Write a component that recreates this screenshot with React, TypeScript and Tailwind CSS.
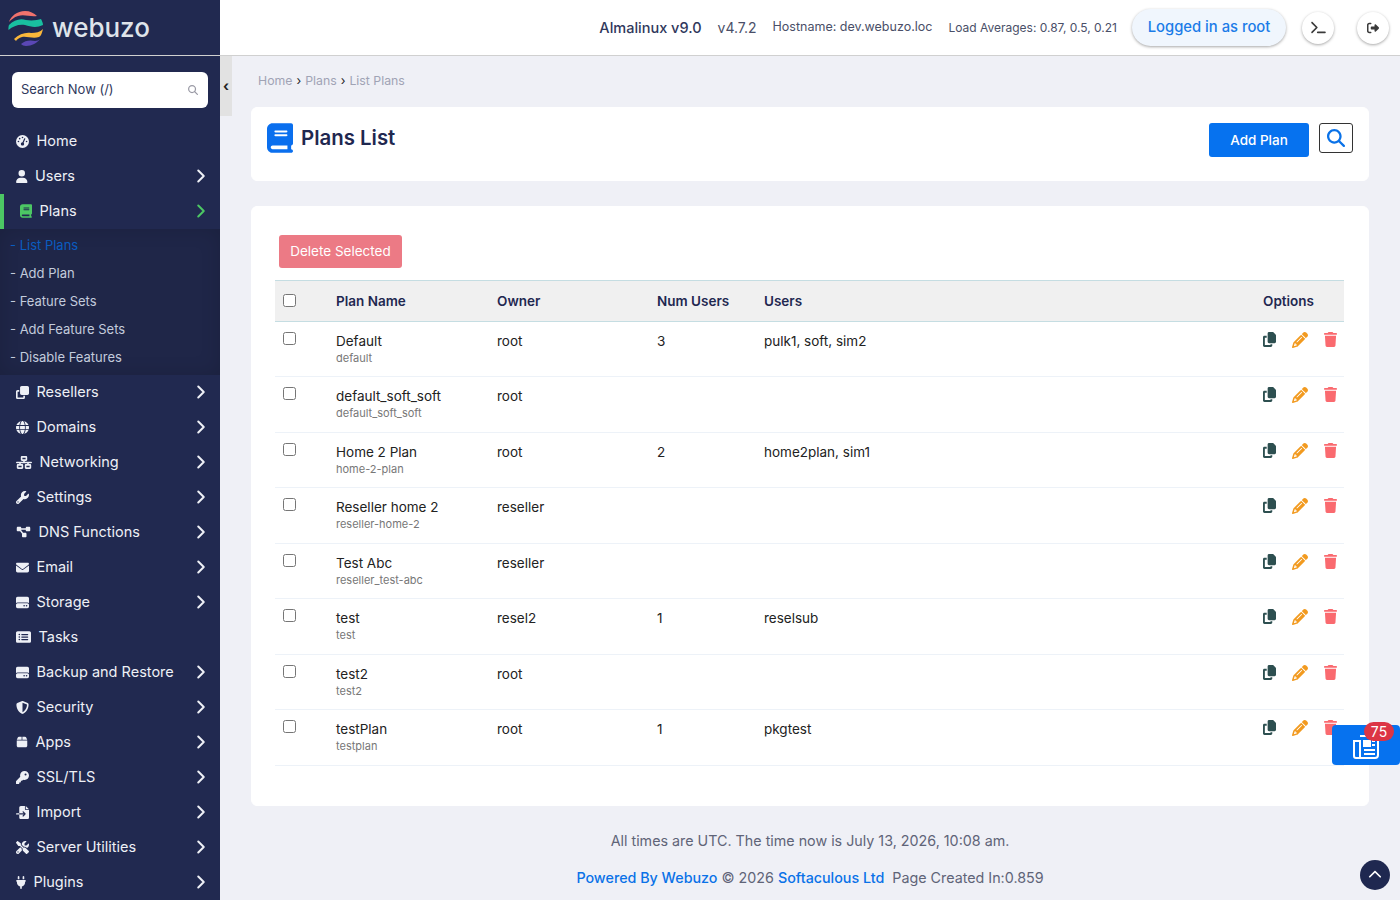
import type { ReactNode } from "react";
import {
  FaBook,
  FaBox,
  FaChevronUp,
  FaClone,
  FaCopy,
  FaEnvelope,
  FaFileImport,
  FaGaugeHigh,
  FaGlobe,
  FaHardDrive,
  FaKey,
  FaNetworkWired,
  FaPencil,
  FaPlug,
  FaRectangleList,
  FaDiagramProject,
  FaMagnifyingGlass,
  FaShieldHalved,
  FaRightFromBracket,
  FaScrewdriverWrench,
  FaTerminal,
  FaTrash,
  FaUser,
  FaWrench,
} from "react-icons/fa6";
import { ChevronRight } from "lucide-react";

type MenuItem = {
  label: string;
  icon: ReactNode;
  arrow?: boolean;
};

const topMenu: MenuItem[] = [
  { label: "Home", icon: <FaGaugeHigh className="h-[13px] w-[13px] shrink-0" /> },
  { label: "Users", icon: <FaUser className="h-[13px] w-[11.5px] shrink-0" />, arrow: true },
];

const bottomMenu: MenuItem[] = [
  { label: "Resellers", icon: <FaClone className="h-[13px] w-[13px] shrink-0" />, arrow: true },
  { label: "Domains", icon: <FaGlobe className="h-[13px] w-[13px] shrink-0" />, arrow: true },
  { label: "Networking", icon: <FaNetworkWired className="h-[13px] w-[16px] shrink-0" />, arrow: true },
  { label: "Settings", icon: <FaWrench className="h-[13px] w-[13px] shrink-0" />, arrow: true },
  { label: "DNS Functions", icon: <FaDiagramProject className="h-[12px] w-[15px] shrink-0" />, arrow: true },
  { label: "Email", icon: <FaEnvelope className="h-[13px] w-[13px] shrink-0" />, arrow: true },
  { label: "Storage", icon: <FaHardDrive className="h-[13px] w-[13px] shrink-0" />, arrow: true },
  { label: "Tasks", icon: <FaRectangleList className="h-[14px] w-[15px] shrink-0" /> },
  { label: "Backup and Restore", icon: <FaHardDrive className="h-[13px] w-[13px] shrink-0" />, arrow: true },
  { label: "Security", icon: <FaShieldHalved className="h-[13px] w-[13px] shrink-0" />, arrow: true },
  { label: "Apps", icon: <FaBox className="h-[12px] w-[12px] shrink-0" />, arrow: true },
  { label: "SSL/TLS", icon: <FaKey className="h-[13px] w-[13px] shrink-0" />, arrow: true },
  { label: "Import", icon: <FaFileImport className="h-[13px] w-[13px] shrink-0" />, arrow: true },
  { label: "Server Utilities", icon: <FaScrewdriverWrench className="h-[13px] w-[13px] shrink-0" />, arrow: true },
  { label: "Plugins", icon: <FaPlug className="h-[13px] w-[10px] shrink-0" />, arrow: true },
];

const subMenu = ["List Plans", "Add Plan", "Feature Sets", "Add Feature Sets", "Disable Features"];

const plans = [
  { name: "Default", slug: "default", owner: "root", num: "3", users: "pulk1, soft, sim2" },
  { name: "default_soft_soft", slug: "default_soft_soft", owner: "root", num: "", users: "" },
  { name: "Home 2 Plan", slug: "home-2-plan", owner: "root", num: "2", users: "home2plan, sim1" },
  { name: "Reseller home 2", slug: "reseller-home-2", owner: "reseller", num: "", users: "" },
  { name: "Test Abc", slug: "reseller_test-abc", owner: "reseller", num: "", users: "" },
  { name: "test", slug: "test", owner: "resel2", num: "1", users: "reselsub" },
  { name: "test2", slug: "test2", owner: "root", num: "", users: "" },
  { name: "testPlan", slug: "testplan", owner: "root", num: "1", users: "pkgtest" },
];

const cols = "grid grid-cols-[61px_161px_160px_107px_499px_82px]";

const MenuRow = ({ item }: { item: MenuItem }) => (
  <div className="flex h-[35px] shrink-0 items-center pl-4 pr-2 text-[14.5px] text-[#eef0f6]">
    {item.icon}
    <span className="ml-[7.5px] flex-1">{item.label}</span>
    {item.arrow && <ChevronRight size={22} strokeWidth={2.2} />}
  </div>
);

const Logo = () => (
  <svg viewBox="0 0 35 35" className="h-[35px] w-[35px]">
    <path d="M1 11C3 5 9 0 17 0C22 0 26 2 29 5C22 6 16 3 10 5C6 6 3 9 1 11Z" fill="#f0726d" />
    <path d="M.5 19C.3 17 .5 15 1 14C6 9 12 7 18 9C24 10 30 9 33 8C34 10 35 12 35 14C29 17 23 16 17 14C11 13 5 15 .5 19Z" fill="#19bfa0" />
    <path d="M6 28C11 23 18 21 23 22C28 22 32 21 35 18C34 22 33 25 31 26C25 28 19 25 14 26C11 27 9 28 8 30Z" fill="#fab73b" />
    <path d="M13 33C17 29 23 29 27 30C29 30 31 29 32 28C29 32 24 35 18 35C16 35 14 34 13 33Z" fill="#5a47b5" />
  </svg>
);

const NewsIcon = () => (
  <svg viewBox="0 0 26 24" className="h-[24px] w-[26px]" fill="none" stroke="white" strokeWidth="2">
    <path d="M7 1H25V20A3 3 0 0 1 22 23H3A2 2 0 0 1 1 21V6H7V22" />
    <path d="M11 6H17V11H11Z" fill="white" />
    <path d="M11 15H22M11 19H22M19 6H22M19 10H22" />
  </svg>
);

export default function App() {
  return (
    <div
      className="flex h-screen w-full overflow-hidden bg-[#eff0f6] text-[#1f2850]"
      style={{ fontFamily: "Inter, 'Open Sans', sans-serif" }}
    >
      <aside className="flex w-[220px] shrink-0 flex-col bg-[#212950]">
        <div className="flex h-[56px] shrink-0 items-center border-b border-[#d0d0d0] pl-2 pt-[1px]">
          <Logo />
          <span className="ml-[9px] text-[26px] font-medium leading-none text-[#dfe4ea]">webuzo</span>
        </div>
        <div className="px-3 pt-4 pb-[15.5px]">
          <div className="flex h-9 items-center justify-between rounded-md bg-white pl-[9px] pr-[10px] text-[13px] text-[#30385c]">
            <span>Search Now (/)</span>
            <FaMagnifyingGlass className="h-[10px] w-[10px] text-[#9a9aa5]" />
          </div>
        </div>
        {topMenu.map((item) => (
          <MenuRow key={item.label} item={item} />
        ))}
        <div className="flex h-[35px] shrink-0 items-center border-l-4 border-[#4cc764] pl-4 pr-2 text-[14.5px] text-[#eef0f6]">
          <FaBook className="h-[14px] w-[12px] shrink-0 text-[#4cc764]" />
          <span className="ml-[7.5px] flex-1">Plans</span>
          <ChevronRight size={22} strokeWidth={2.2} className="text-[#4cc764]" />
        </div>
        <div className="shrink-0 bg-[#1f2648] py-[3px] shadow-[inset_0_0_20px_rgba(0,0,0,0.14)]">
          {subMenu.map((s, i) => (
            <div
              key={s}
              className={`flex h-7 items-center pl-[10px] text-[13px] ${i === 0 ? "text-[#0a5cc0]" : "text-[#c3cbdc]"}`}
            >
              - {s}
            </div>
          ))}
        </div>
        {bottomMenu.map((item) => (
          <MenuRow key={item.label} item={item} />
        ))}
      </aside>

      <div className="relative flex min-w-0 flex-1 flex-col">
        <header className="flex h-[56px] shrink-0 items-center justify-end border-b border-[#d0d0d0] bg-white pr-[11px] text-[#4a4f68]">
          <span className="text-[14.5px] font-medium text-[#30385c]">Almalinux v9.0</span>
          <span className="ml-4 text-[14px]">v4.7.2</span>
          <span className="ml-4 text-[12.5px]">Hostname: dev.webuzo.loc</span>
          <span className="ml-4 text-[12px]">Load Averages: 0.87, 0.5, 0.21</span>
          <span className="ml-[15px] flex h-[37px] w-[154px] items-center justify-center rounded-full bg-[#f0f6fd] text-[14.8px] font-medium text-[#1b7ce8] shadow-[0_1px_3px_rgba(0,0,0,0.35)]">
            Logged in as root
          </span>
          <span className="ml-4 flex h-8 w-8 items-center justify-center rounded-full bg-white shadow-[0_1px_3px_rgba(0,0,0,0.35)]">
            <FaTerminal className="h-[13px] w-[15px] text-[#3a3a3a]" />
          </span>
          <span className="ml-[23px] flex h-8 w-8 items-center justify-center rounded-full bg-white shadow-[0_1px_3px_rgba(0,0,0,0.35)]">
            <FaRightFromBracket className="h-[12px] w-[12px] text-[#3a3a3a]" />
          </span>
        </header>

        {/* collapse tab for the sidebar */}
        <div className="absolute left-0 top-[56px] flex h-[60px] w-3 items-center justify-center bg-[#e2e2e2] text-[14px] font-bold leading-none text-[#222]">
          ‹
        </div>

        <main className="flex-1 px-[31px]">
          <div className="flex h-[51px] items-center pl-[7px] text-[12.3px] text-[#a0a3b5]">
            Home <span className="mx-1 text-[#222]">›</span> Plans <span className="mx-1 text-[#222]">›</span> List Plans
          </div>

          <section className="flex h-[74px] items-start justify-between rounded-md border border-white bg-white pl-[15px] pr-[15px] pt-[15px]">
            <div className="flex items-center gap-2">
              <FaBook className="h-[30px] w-[26px] text-[#0a6fee]" />
              <h1 className="text-[20.4px] font-semibold leading-none text-[#1f2850]">Plans List</h1>
            </div>
            <div className="flex items-start gap-[10px]">
              <button className="h-[34px] w-[100px] rounded-[3px] bg-[#0672ef] text-[13.5px] font-medium text-white">
                Add Plan
              </button>
              <button className="flex h-[30px] w-[34px] items-center justify-center rounded-[3px] border border-[#333]">
                <FaMagnifyingGlass className="h-[18px] w-[18px] text-[#0a72e8]" />
              </button>
            </div>
          </section>

          <section className="mt-[25px] h-[600px] rounded-md border border-white bg-white pl-[23px] pr-6 pt-7">
            <button className="ml-[4px] h-[33px] w-[123px] rounded-[3px] bg-[#ec7a85] text-[13.5px] text-white">
              Delete Selected
            </button>

            <div className="mt-3">
              <div className={`${cols} h-[41.6px] items-center border-y border-[#c5dde2] bg-[#f0f0f0] text-[13.5px] font-semibold`}>
                <div className="pl-2 pt-[3px]">
                  <input type="checkbox" />
                </div>
                <div>Plan Name</div>
                <div>Owner</div>
                <div>Num Users</div>
                <div>Users</div>
                <div>Options</div>
              </div>
              {plans.map((p) => (
                <div key={p.slug} className={`${cols} h-[55.5px] border-b border-[#edf2f8] text-[13.5px] text-[#222]`}>
                  <div className="pl-2 pt-[8px]">
                    <input type="checkbox" />
                  </div>
                  <div className="pt-[11px]">
                    <div className="leading-[17px]">{p.name}</div>
                    <div className="mt-[1px] text-[11px] leading-[15px] text-[#777]">{p.slug}</div>
                  </div>
                  <div className="pt-[11px] leading-[17px]">{p.owner}</div>
                  <div className="pt-[11px] leading-[17px]">{p.num}</div>
                  <div className="pt-[11px] leading-[17px]">{p.users}</div>
                  <div className="flex items-start pt-[10px]">
                    <FaCopy className="h-[15px] w-[13px] text-[#2d4f50]" />
                    <FaPencil className="ml-4 h-[16px] w-[16px] text-[#f29a1f]" />
                    <FaTrash className="ml-4 h-[15px] w-[13px] text-[#fa6a6f]" />
                  </div>
                </div>
              ))}
            </div>
          </section>

          <footer className="text-center text-[14.3px] text-[#5f6478]">
            <p className="mt-[25px] leading-[20px]">All times are UTC. The time now is July 13, 2026, 10:08 am.</p>
            <p className="mt-[17px] leading-[20px]">
              <span className="font-medium text-[#0a72e8]">Powered By Webuzo</span> © 2026{" "}
              <span className="font-medium text-[#0a72e8]">Softaculous Ltd</span>
              <span className="ml-2">Page Created In:0.859</span>
            </p>
          </footer>
        </main>

        {/* floating news button and scroll-to-top */}
        <div className="absolute right-0 top-[725px] flex h-10 w-[68px] items-center justify-center rounded-[4px] bg-[#0672ef]">
          <span className="mt-[3px]">
            <NewsIcon />
          </span>
          <span className="absolute left-[32px] top-[-3px] flex h-[19px] w-[30px] items-center justify-center rounded-full bg-[#dc3545] text-[14px] text-white">
            75
          </span>
        </div>
        <div className="absolute right-[10px] top-[860px] flex h-[30px] w-[30px] items-center justify-center rounded-full bg-[#1f2850]">
          <FaChevronUp className="h-[14px] w-[14px] text-white" />
        </div>
      </div>
    </div>
  );
}
